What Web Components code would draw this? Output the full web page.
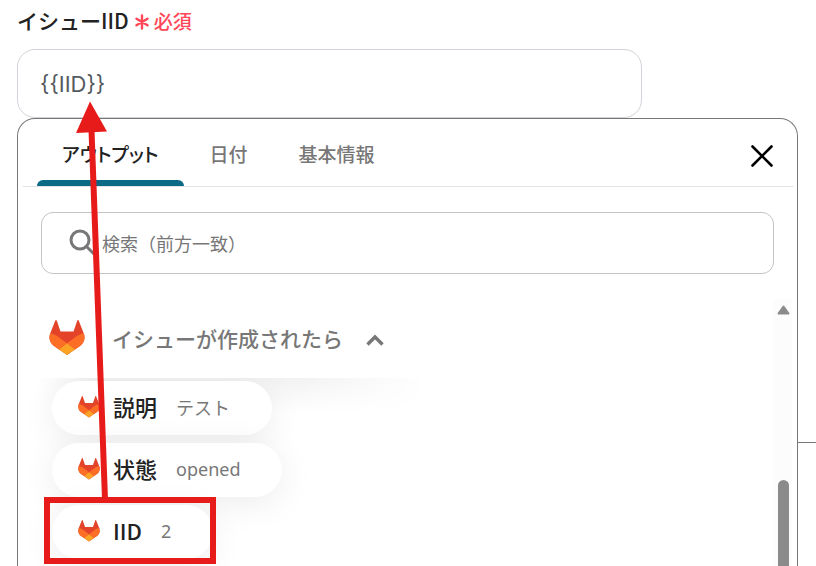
<!DOCTYPE html>
<html lang="ja">
<head>
<meta charset="utf-8">
<meta name="viewport" content="width=device-width, initial-scale=1">
<title>イシューIID</title>
<style>
    html, body {
        height: 100%;
    }
    body {
        margin: 0;
        overflow: hidden;
        background: #fff;
        color: #222;
        font-family: "Noto Sans CJK JP", "Noto Sans", sans-serif;
    }
</style>
</head>
<body>
<issue-form>
    <form-field label="イシューIID" value="{{IID}}"></form-field>
    <output-panel>
        <tab-bar slot="tabs"></tab-bar>
        <search-box slot="search" placeholder="検索（前方一致）"></search-box>
        <output-group label="イシューが作成されたら">
            <output-chip name="説明">テスト</output-chip>
            <output-chip name="状態">opened</output-chip>
            <output-chip name="IID">2</output-chip>
        </output-group>
    </output-panel>
</issue-form>
<mark-arrow></mark-arrow>

<script>
class IssueForm extends HTMLElement {
    constructor() {
        super();
        this.attachShadow({ mode: 'open' });
        this.shadowRoot.innerHTML = `
            <style>
                :host {
                    display: flex;
                    flex-direction: column;
                    box-sizing: border-box;
                    height: 100%;
                    padding: 5px 18px 0 17px;
                }
            </style>
            <slot></slot>
        `;
    }
}

class FormField extends HTMLElement {
    constructor() {
        super();
        this.attachShadow({ mode: 'open' });
        this.shadowRoot.innerHTML = `
            <style>
                :host {
                    display: block;
                    flex: none;
                }
                .head {
                    display: flex;
                    align-items: center;
                    gap: 6px;
                    height: 30px;
                    margin-bottom: 14px;
                }
                label {
                    font-size: 21px;
                    font-weight: 500;
                }
                .required {
                    display: flex;
                    align-items: center;
                    gap: 5px;
                    color: #ff4757;
                    font-size: 19px;
                    font-weight: 500;
                }
                svg {
                    margin-top: 4px;
                }
                input {
                    display: block;
                    box-sizing: border-box;
                    width: 80%;
                    height: 69px;
                    padding: 0 22px;
                    border: 1px solid #d0d3d9;
                    border-radius: 18px;
                    outline: none;
                    background: #fff;
                    color: #555a60;
                    font-family: Inter, "Noto Sans CJK JP", sans-serif;
                    font-size: 22px;
                }
            </style>
            <div class="head">
                <label for="value"></label>
                <span class="required">
                    <svg width="14" height="16" viewBox="0 0 14 16" fill="none" stroke="currentColor" stroke-width="2.4" stroke-linecap="round">
                        <path d="M7 1.5v13M1.5 4.7l11 6.6M12.5 4.7l-11 6.6"/>
                    </svg>
                    <span>必須</span>
                </span>
            </div>
            <input id="value" type="text">
        `;
    }

    connectedCallback() {
        this.shadowRoot.querySelector('label').textContent = this.getAttribute('label');
        this.shadowRoot.querySelector('input').value = this.getAttribute('value');
    }
}

class OutputPanel extends HTMLElement {
    constructor() {
        super();
        this.attachShadow({ mode: 'open' });
        this.shadowRoot.innerHTML = `
            <style>
                :host {
                    position: relative;
                    display: flex;
                    flex-direction: column;
                    flex: 1;
                    min-height: 0;
                    padding: 0 4px 0 5px;
                    border: 1px solid #777;
                    border-bottom: 0;
                    border-radius: 18px 18px 0 0;
                    background: #fff;
                }
                /* line to the next node of the flow */
                :host::after {
                    content: "";
                    position: absolute;
                    left: 100%;
                    top: 323px;
                    width: 24px;
                    height: 1px;
                    background: #777;
                }
                .search {
                    flex: none;
                    padding: 25px 19px 25px 18px;
                }
                .body {
                    display: flex;
                    flex: 1;
                    min-height: 0;
                    padding-right: 1px;
                }
                .list {
                    flex: 1;
                    min-width: 0;
                    overflow: hidden;
                    padding-left: 17px;
                }
                .bar {
                    display: flex;
                    flex-direction: column;
                    align-items: center;
                    box-sizing: border-box;
                    width: 18px;
                    padding-top: 6px;
                    background: #fcfcfc;
                }
                .bar svg {
                    flex: none;
                }
                .thumb {
                    flex: 1;
                    width: 11px;
                    margin-top: 165px;
                    border-radius: 6px 6px 0 0;
                    background: #8b8b8b;
                }
            </style>
            <slot name="tabs"></slot>
            <div class="search"><slot name="search"></slot></div>
            <div class="body">
                <div class="list"><slot></slot></div>
                <div class="bar">
                    <svg width="13" height="10" viewBox="0 0 13 10">
                        <path d="M6.5 1.5 11.5 8.5h-10z" fill="#8b8b8b" stroke="#8b8b8b" stroke-width="2" stroke-linejoin="round"/>
                    </svg>
                    <div class="thumb"></div>
                </div>
            </div>
        `;
    }
}

class TabBar extends HTMLElement {
    constructor() {
        super();
        this.attachShadow({ mode: 'open' });
        this.shadowRoot.innerHTML = `
            <style>
                :host {
                    display: flex;
                    flex: none;
                    justify-content: space-between;
                    height: 67px;
                    padding: 0 14px;
                    border-bottom: 1px solid #e2e3e5;
                }
                .tabs {
                    display: flex;
                    gap: 1px;
                }
                button {
                    border: 0;
                    background: none;
                    font: inherit;
                    cursor: pointer;
                }
                .tabs button {
                    position: relative;
                    padding: 2px 25px 0;
                    color: #777;
                    font-size: 19px;
                    font-weight: 500;
                    font-feature-settings: "palt";
                }
                .tabs button.active {
                    color: #222;
                }
                .tabs button.active::after {
                    content: "";
                    position: absolute;
                    left: 0;
                    right: 0;
                    bottom: 0;
                    height: 6px;
                    border-radius: 6px 6px 0 0;
                    background: #0b6b86;
                }
                .close {
                    display: flex;
                    align-items: center;
                    padding: 6px 6px 0;
                }
            </style>
            <div class="tabs" role="tablist">
                <button class="active" role="tab" aria-selected="true">アウトプット</button>
                <button role="tab" aria-selected="false">日付</button>
                <button role="tab" aria-selected="false">基本情報</button>
            </div>
            <button class="close" aria-label="閉じる">
                <svg width="22" height="22" viewBox="0 0 22 22" fill="none" stroke="#000" stroke-width="2.6" stroke-linecap="round">
                    <path d="M1.5 1.5l19 19M20.5 1.5l-19 19"/>
                </svg>
            </button>
        `;
    }

    connectedCallback() {
        const tabs = this.shadowRoot.querySelectorAll('[role="tab"]');
        tabs.forEach(tab => tab.addEventListener('click', () => {
            tabs.forEach(t => {
                t.classList.toggle('active', t === tab);
                t.setAttribute('aria-selected', t === tab);
            });
        }));
    }
}

class SearchBox extends HTMLElement {
    constructor() {
        super();
        this.attachShadow({ mode: 'open' });
        this.shadowRoot.innerHTML = `
            <style>
                :host {
                    display: flex;
                    align-items: center;
                    box-sizing: border-box;
                    height: 62px;
                    padding: 0 26px;
                    gap: 6px;
                    border: 1px solid #c4c4c4;
                    border-radius: 12px;
                }
                svg {
                    flex: none;
                }
                input {
                    flex: 1;
                    min-width: 0;
                    padding: 0;
                    border: 0;
                    outline: none;
                    background: none;
                    color: #222;
                    font: inherit;
                    font-size: 18px;
                }
                input::placeholder {
                    color: #777;
                }
            </style>
            <svg width="28" height="28" viewBox="0 0 28 28" fill="none" stroke="#777" stroke-width="3">
                <circle cx="12" cy="11" r="9"/>
                <path d="M18 17l8 8"/>
            </svg>
            <input type="search" id="q">
        `;
    }

    connectedCallback() {
        const input = this.shadowRoot.querySelector('input');
        input.placeholder = this.getAttribute('placeholder');
        input.setAttribute('aria-label', this.getAttribute('placeholder'));
    }
}

class GitlabLogo extends HTMLElement {
    constructor() {
        super();
        this.attachShadow({ mode: 'open' });
        this.shadowRoot.innerHTML = `
            <style>
                :host {
                    display: block;
                    flex: none;
                    width: 22px;
                }
                svg {
                    display: block;
                    width: 100%;
                }
            </style>
            <svg viewBox="0 0 36 35">
                <path d="M6.2.7c.3-.8 1.3-.8 1.6 0L11.5 11.5h13L28.2.7c.3-.8 1.3-.8 1.6 0l4.9 12.5c2 5 .3 9.8-3.7 12.8L18 35 5 26C1 23-.7 18.2 1.3 13.2z" fill="#e24329"/>
                <path d="M34.7 13.2c-3 .6-5.8 1.9-8.2 3.700L18 23.2l8 6.200 5-3.400c4-3 5.700-7.800 3.700-12.800z" fill="#fc6d26"/>
                <path d="M1.3 13.2c3 .6 5.8 1.9 8.2 3.700l8.500 6.300-8 6.200-5-3.400C1 23-.7 18.200 1.300 13.200z" fill="#fc6d26"/>
                <path d="M10 29.4l8-6.2 8 6.2L18 35z" fill="#fca326"/>
            </svg>
        `;
    }
}

class OutputGroup extends HTMLElement {
    constructor() {
        super();
        this.attachShadow({ mode: 'open' });
        this.shadowRoot.innerHTML = `
            <style>
                :host {
                    display: block;
                    padding-right: 20px;
                }
                .head {
                    position: relative;
                    display: flex;
                    height: 79px;
                    z-index: 1;
                }
                /* soft shade under the heading */
                .head::after {
                    content: "";
                    position: absolute;
                    left: 0;
                    top: 100%;
                    z-index: -1;
                    width: 386px;
                    height: 34px;
                    background: linear-gradient(#f2f2f2, #fff);
                    mask: linear-gradient(90deg, #0000, #000 50px, #000 260px, #0000);
                }
                button {
                    display: flex;
                    align-items: center;
                    gap: 27px;
                    padding: 0 9px 2px;
                    border: 0;
                    background: #fff;
                    color: #777;
                    font: inherit;
                    font-size: 21px;
                    font-weight: 500;
                    cursor: pointer;
                }
                gitlab-logo {
                    width: 36px;
                }
                .text {
                    display: flex;
                    align-items: center;
                    gap: 23px;
                }
                .text svg {
                    margin-top: 4px;
                }
                .chips {
                    position: relative;
                    z-index: 1;
                    display: flex;
                    flex-direction: column;
                    align-items: flex-start;
                    gap: 8px;
                    margin-top: 3px;
                    padding: 0 12px 20px;
                    clip-path: inset(-3px -60px -60px -60px);
                }
                .chips[hidden] {
                    display: none;
                }
            </style>
            <div class="head">
                <button aria-expanded="true">
                    <gitlab-logo></gitlab-logo>
                    <span class="text">
                        <span class="label"></span>
                        <svg width="18" height="12" viewBox="0 0 18 12" fill="none" stroke="#777" stroke-width="3.4">
                            <path d="M1.5 10.5L9 3l7.5 7.5"/>
                        </svg>
                    </span>
                </button>
            </div>
            <div class="chips"><slot></slot></div>
        `;
        this.button = this.shadowRoot.querySelector('button');
    }

    connectedCallback() {
        this.shadowRoot.querySelector('.label').textContent = this.getAttribute('label');
        this.button.addEventListener('click', () => this.toggle());
    }

    toggle() {
        const chips = this.shadowRoot.querySelector('.chips');
        chips.hidden = !chips.hidden;
        this.button.setAttribute('aria-expanded', !chips.hidden);
    }
}

class OutputChip extends HTMLElement {
    constructor() {
        super();
        this.attachShadow({ mode: 'open' });
        this.shadowRoot.innerHTML = `
            <style>
                :host {
                    display: block;
                }
                button {
                    display: flex;
                    align-items: center;
                    height: 54px;
                    padding: 0 42px 2px 26px;
                    border: 0;
                    border-radius: 27px;
                    background: #fff;
                    box-shadow: 0 6px 34px rgba(0, 0, 0, 0.08);
                    color: #222;
                    font: inherit;
                    cursor: pointer;
                }
                gitlab-logo {
                    margin-right: 13px;
                }
                .name {
                    margin: 0 19px 2px 0;
                    font-size: 22px;
                    font-weight: 500;
                }
                .value {
                    color: #777;
                    font-family: "Noto Sans", "Noto Sans CJK JP", sans-serif;
                    font-size: 18px;
                }
            </style>
            <button>
                <gitlab-logo></gitlab-logo>
                <span class="name"></span>
                <span class="value"><slot></slot></span>
            </button>
        `;
    }

    connectedCallback() {
        this.shadowRoot.querySelector('.name').textContent = this.getAttribute('name');
    }
}

// Red arrow and frame laid over the form
class MarkArrow extends HTMLElement {
    constructor() {
        super();
        this.attachShadow({ mode: 'open' });
        this.shadowRoot.innerHTML = `
            <style>
                :host {
                    position: absolute;
                    left: 0;
                    top: 0;
                    z-index: 2;
                    pointer-events: none;
                }
                svg {
                    display: block;
                }
            </style>
            <svg width="220" height="566" viewBox="0 0 220 566" fill="none" stroke="#e81b1b" stroke-width="6">
                <path d="M91.5 130L105 499"/>
                <path d="M90 101.5L107 131.5 76 133z" fill="#e81b1b" stroke="none"/>
                <rect x="47" y="500" width="166" height="61"/>
            </svg>
        `;
    }
}

customElements.define('issue-form', IssueForm);
customElements.define('form-field', FormField);
customElements.define('output-panel', OutputPanel);
customElements.define('tab-bar', TabBar);
customElements.define('search-box', SearchBox);
customElements.define('gitlab-logo', GitlabLogo);
customElements.define('output-group', OutputGroup);
customElements.define('output-chip', OutputChip);
customElements.define('mark-arrow', MarkArrow);
</script>
</body>
</html>
